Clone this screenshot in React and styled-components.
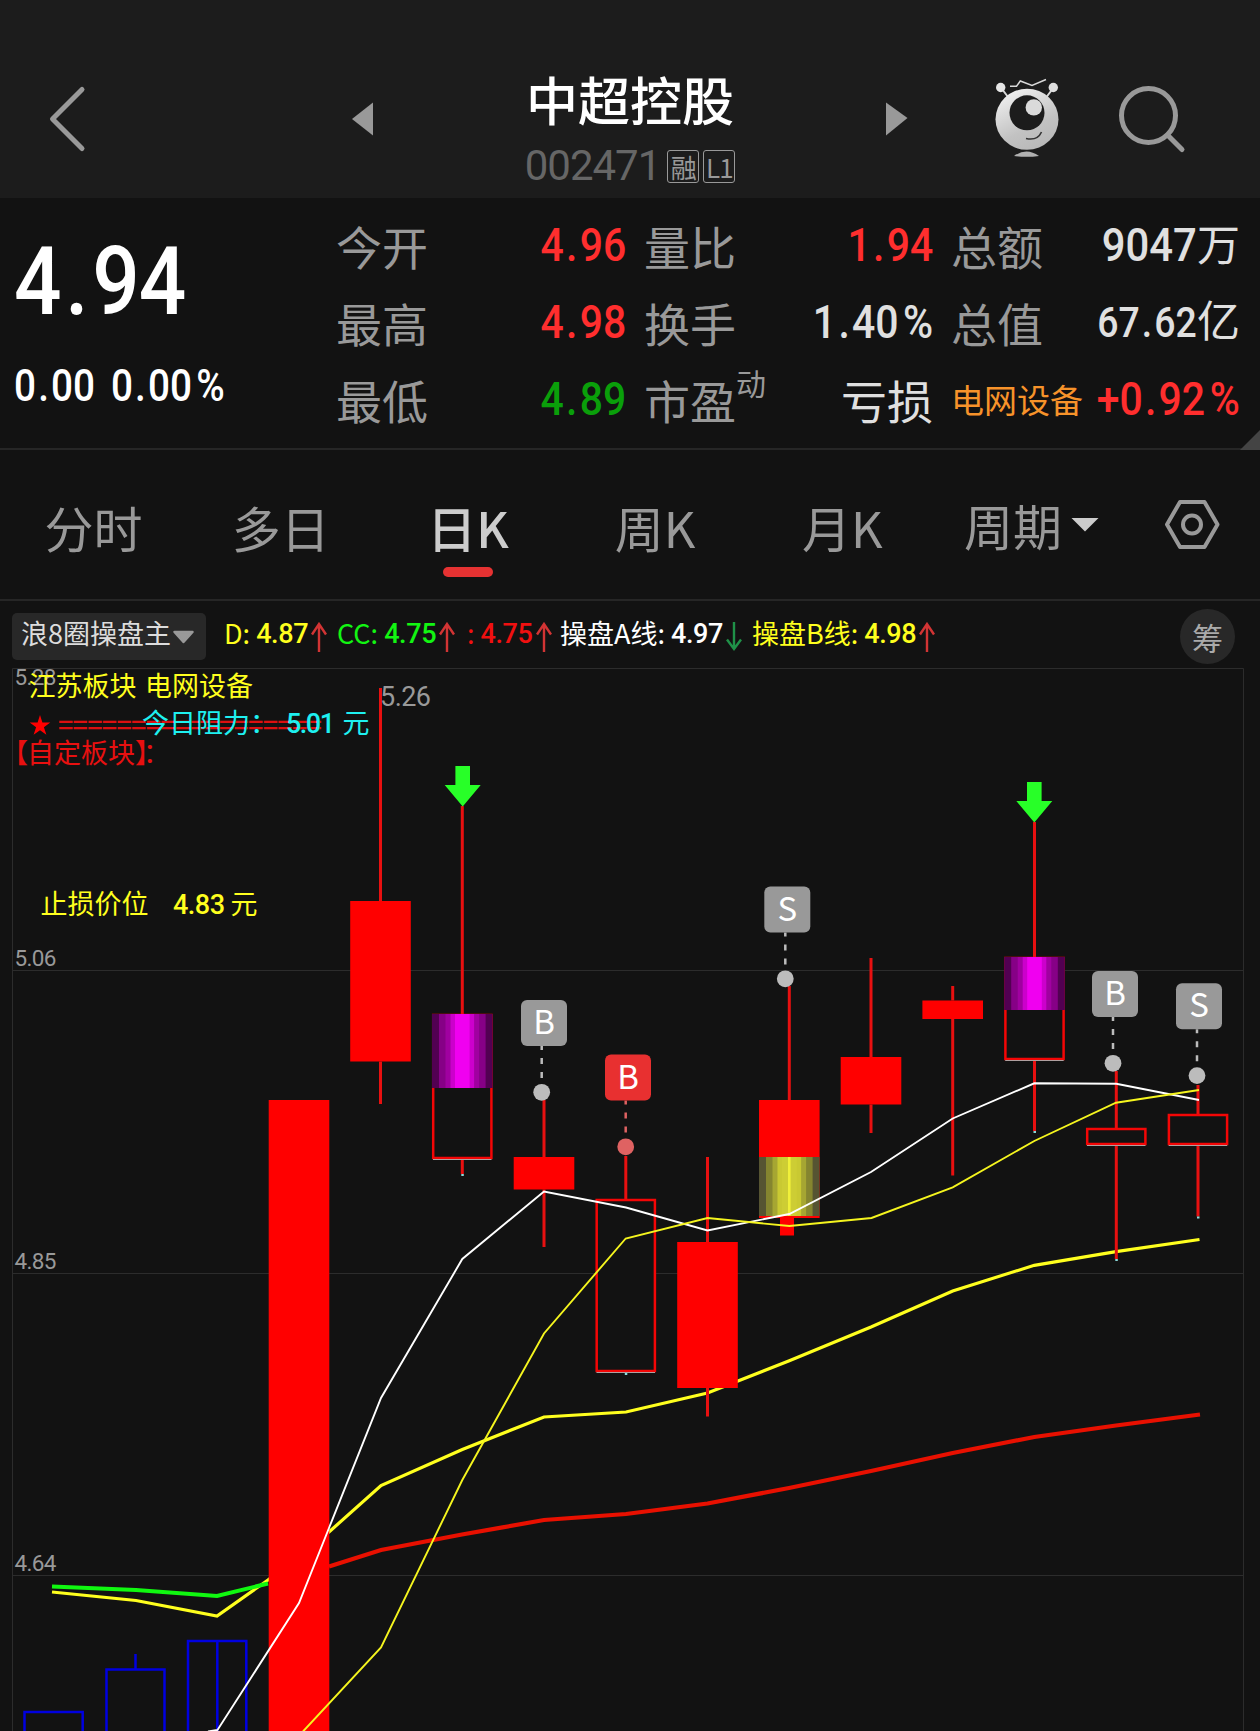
import styled, { createGlobalStyle } from 'styled-components';

const CJK = "'Noto Sans CJK SC', sans-serif";
const NUM = "Roboto, 'Noto Sans CJK SC', sans-serif";

const quotes = [
  { label: '今开', value: '4.96', color: '#ff2e2e' },
  { label: '量比', value: '1.94', color: '#ff2e2e' },
  { label: '总额', value: '9047', unit: '万', size: 47 },
  { label: '最高', value: '4.98', color: '#ff2e2e' },
  { label: '换手', value: '1.40%' },
  { label: '总值', value: '67.62', unit: '亿', size: 42 },
  { label: '最低', value: '4.89', color: '#0a9f0a' },
  { label: '市盈', sup: '动', text: '亏损' },
  { sector: '电网设备', value: '+0.92%', color: '#ff2e2e' },
];

const tabs = ['分时', '多日', '日K', '周K', '月K'];

const indicators = [
  { name: 'D: ', value: '4.87', color: '#ffff1e', width: 113, up: true },
  { name: 'CC: ', value: '4.75', color: '#12f512', width: 130, up: true },
  { name: ': ', value: '4.75', color: '#f01010', width: 93, up: true },
  { name: '操盘A线: ', value: '4.97', color: '#ffffff', width: 192, up: false },
  { name: '操盘B线: ', value: '4.98', color: '#ffff1e', width: 190, up: true },
];

const axis = [
  { y: 689, label: '5.28' },
  { y: 970.5, label: '5.06' },
  { y: 1273, label: '4.85' },
  { y: 1575.5, label: '4.64' },
];

// x = centre of the candle, hi / lo = wick, top / bottom = body
const candles = [
  { x: 299, top: 1100, bottom: 1740 },
  { x: 380.5, hi: 688, top: 901, bottom: 1061.5, lo: 1104 },
  { x: 462.3, hi: 806, top: 1014, bottom: 1159, lo: 1174, hollow: true, band: [1014, 1088, 'purple'] },
  { x: 544, hi: 1100, top: 1157, bottom: 1189.5, lo: 1247 },
  { x: 625.8, hi: 1156, top: 1199, bottom: 1372, lo: 1373, hollow: true },
  { x: 707.5, hi: 1157, top: 1242, bottom: 1388, lo: 1416.5 },
  { x: 789.3, hi: 986, top: 1100, bottom: 1218, lo: 1218, band: [1157, 1216, 'olive'] },
  { x: 871, hi: 958, top: 1057, bottom: 1104.5, lo: 1133 },
  { x: 952.7, hi: 986, top: 1000.5, bottom: 1019, lo: 1175.5 },
  { x: 1034.5, hi: 822, top: 957, bottom: 1060, lo: 1131, hollow: true, band: [957, 1010, 'purple'] },
  { x: 1116.3, hi: 1071, top: 1128, bottom: 1145, lo: 1259, hollow: true },
  { x: 1198, hi: 1085, top: 1114, bottom: 1145, lo: 1216.5, hollow: true },
];

const bands = {
  purple: ['#520052', '#860086', '#a000a0', '#cc00cc', '#f000f0'],
  olive: ['#565432', '#85852f', '#a6a632', '#c9c932', '#cdcd34'],
};
const bandSteps = [0, 7, 13.5, 18.5, 23];

const marks = [
  { x: 521, y: 1000, dot: 541.7, text: 'B' },
  { x: 605, y: 1054.5, dot: 625.7, text: 'B', red: true },
  { x: 764.3, y: 886.5, dot: 785.3, text: 'S' },
  { x: 1092, y: 971, dot: 1113, text: 'B' },
  { x: 1176, y: 983.3, dot: 1197, text: 'S' },
];

// narrow figures, the point and the percent sign get some room
function Figures({ children, right }) {
  return (
    <Narrow $right={right}>
      {children.split(/([.%+])/).filter(Boolean).map((part, i) => (
        /[.%+]/.test(part) ? <Sign key={i} $wide={part !== '.'}>{part}</Sign> : part
      ))}
    </Narrow>
  );
}

function Arrow({ up }) {
  return (
    <ArrowSvg viewBox="0 0 16 30">
      {up ? (
        <path d="M8 30V2M1 12.500L8 2l7 10.500" stroke="#d23434" />
      ) : (
        <path d="M8 0v27M1 17.500L8 27l7-9.500" stroke="#1f9148" />
      )}
    </ArrowSvg>
  );
}

function Robot() {
  return (
    <svg width="66" height="82" viewBox="995 79 66 82">
      <defs>
        <linearGradient id="egg" x1="0.2" y1="0" x2="0.7" y2="1">
          <stop offset="0" stopColor="#f2f2f2" />
          <stop offset="0.65" stopColor="#c2c2c2" />
          <stop offset="1" stopColor="#b8b8b8" />
        </linearGradient>
      </defs>
      <g fill="none" stroke="#d8d8d8">
        <path d="M1011 87.300h6.500l3.800-5.300 11.700 4.500 14-6" strokeWidth="1.500" />
        <path d="M1003 90l6 8M1053.500 90l-6 8" strokeWidth="2" />
      </g>
      <circle cx="1001.700" cy="88.500" r="4.700" fill="#e6e6e6" />
      <circle cx="1054.300" cy="88.500" r="4.700" fill="#dedede" />
      <ellipse cx="1028" cy="120.300" rx="31.500" ry="30.500" fill="url(#egg)" />
      <circle cx="1028" cy="113.800" r="17.500" fill="#1c1c1c" />
      <circle cx="1034.800" cy="108.400" r="8.200" fill="#dadada" />
      <path d="M1027 139.500q11.500 2.500 15.500-6.500" fill="none" stroke="#333" strokeWidth="1.600" />
      <path d="M1015 157q12.500-9 25 0q-12.500 1.700-25 0z" fill="#b0b0b0" />
    </svg>
  );
}

function Candle({ c }) {
  const left = c.x - 30.3;
  return (
    <g>
      {c.hi && <path d={`M${c.x} ${c.hi}V${c.top}M${c.x} ${c.bottom}V${c.lo}`} stroke="#e81010" strokeWidth="3" />}
      {c.hollow ? (
        <>
          <rect x={left + 1.2} y={c.top + 1} width="58.200" height={c.bottom - c.top - 2} fill="#121212" stroke="#f40606" strokeWidth="2.500" />
          <path d={`M${left + 1} ${c.bottom + 0.5}h58.500`} stroke="#b0a0a0" />
          <path d={`M${c.x - 1} ${c.lo + 1}h2.500`} stroke="#8adada" strokeWidth="2" />
        </>
      ) : (
        <rect x={left} y={c.top} width="60.600" height={c.bottom - c.top} fill="#ff0000" />
      )}
      {c.band && bandSteps.map((s, i) => (
        <rect
          key={s}
          x={left + s}
          y={c.band[0]}
          width={60.6 - s * 2}
          height={c.band[1] - c.band[0]}
          fill={bands[c.band[2]][i]}
        />
      ))}
      {c.band && c.band[2] === 'olive' && (
        <>
          <rect x={c.x - 1.3} y={c.band[0]} width="2.600" height={c.band[1] - c.band[0]} fill="#f0f03a" />
          <rect x="780" y="1217" width="14" height="18.500" fill="#ff0000" />
        </>
      )}
    </g>
  );
}

function Mark({ m }) {
  const light = m.red ? '#df6262' : '#bcbcbc';
  return (
    <g>
      <path d={`M${m.dot} ${m.y + 46}v38`} stroke={light} strokeWidth="2.500" strokeDasharray="6 8" strokeDashoffset="2" />
      <circle cx={m.dot} cy={m.y + 92.3} r="8.400" fill={light} />
      <rect x={m.x} y={m.y} width="46" height="46" rx="6" fill={m.red ? '#e83030' : '#999999'} />
      <MarkText x={m.x + 23} y={m.y + 34}>{m.text}</MarkText>
    </g>
  );
}

function Chart() {
  return (
    <ChartSvg viewBox="0 668 1260 1063">
      <path d="M12.500 1731V668.500H1243.500V1731M12.500 970.500h1231M12.500 1273.500h1231M12.500 1575.500h1231" fill="none" stroke="#2c2c2c" />

      {axis.map((a) => (
        <AxisText key={a.label} x="14.500" y={a.y - 4.5} textLength="42">{a.label}</AxisText>
      ))}

      <g fill="none" strokeWidth="3.200">
        <path d="M52 1592L136 1600.500L217 1616L268 1580L329 1532L381 1485.500L462.300 1449.500L544 1417L626 1412L707.500 1393L789.300 1360.700L871 1327L952.700 1291L1034.300 1265.300L1116 1251.700L1199.500 1239.500" stroke="#ffff1e" />
        <path d="M52 1586.500L136 1590L217 1596L268 1583.500" stroke="#10f810" strokeWidth="4" />
        <path d="M329 1566.500L381 1550L462 1534.500L544 1520L626 1514L707.500 1503.500L789 1488L871 1471L952.700 1453L1034.300 1437L1116 1425.500L1200 1414.500" stroke="#e81000" strokeWidth="4.200" />
      </g>

      <g fill="none" stroke="#0000e0" strokeWidth="2.500">
        <path d="M24.500 1731V1712H82.700V1731" />
        <path d="M106.500 1731V1669.500H164.500V1731M135.500 1654v15" />
        <path d="M188 1731V1641H246.300V1731M217.300 1641v90" />
      </g>

      {candles.map((c) => <Candle key={c.x} c={c} />)}

      <g fill="none" strokeWidth="1.900">
        <path d="M208 1731.500L217.500 1730L299 1603L329 1528L381 1398L462.300 1259L544 1191.500L626 1207.500L707.500 1230.500L789.300 1214L871 1172L952.700 1118.500L1034.300 1083.300L1116.300 1083.700L1199 1100" stroke="#ffffff" />
        <path d="M303 1731.500L381 1647.500L462.300 1480L544 1333.500L625.700 1238.500L707.500 1218L789.300 1226L871.500 1218L952.700 1187.300L1034.300 1141L1116 1102.700L1199 1090" stroke="#f5f51e" />
      </g>

      {[[462.7, 766], [1034.3, 782]].map(([x, y]) => (
        <path key={x} d={`M${x - 7.3} ${y}h14.600v19h10.700l-18 21.500l-18-21.500h10.700z`} fill="#28ff28" />
      ))}

      {marks.map((m) => <Mark key={m.x} m={m} />)}

      <NoteText x="28.500" y="696" fill="#ffff1e">江苏板块</NoteText>
      <NoteText x="145" y="696" fill="#ffff1e">电网设备</NoteText>
      <path d="M40 715l2.400 7.600h7.900l-6.400 4.600l2.500 7.600L40 730.200l-6.400 4.600l2.500-7.600l-6.400-4.600h7.900z" fill="#ff0000" />
      <NoteText x="58" y="735" fill="#dc1010" textLength="264" $bold>==================</NoteText>
      <NoteText x="142" y="733" fill="#1ef0f0">今日阻力：</NoteText>
      <NoteNum x="286" y="733" fill="#1ef0f0" textLength="49">5.01</NoteNum>
      <NoteText x="342.500" y="733" fill="#1ef0f0">元</NoteText>
      <NoteText y="763" fill="#e81010">
        <tspan x="1">【</tspan>
        <tspan x="27">自定板块</tspan>
        <tspan x="135">】</tspan>
        <tspan x="143">：</tspan>
      </NoteText>
      <NoteText x="40.500" y="914" fill="#ffff1e">止损价位</NoteText>
      <NoteNum x="173" y="914" fill="#ffff1e" textLength="52">4.83</NoteNum>
      <NoteText x="230.500" y="914" fill="#ffff1e">元</NoteText>
      <NoteNum x="380" y="706" fill="#999999" textLength="51" $light>5.26</NoteNum>
    </ChartSvg>
  );
}

export default function App() {
  return (
    <Page>
      <GlobalStyle />
      <Header>
        <svg width="50" height="70" viewBox="42 84 50 70" fill="none" stroke="#999" strokeWidth="5" strokeLinecap="round" strokeLinejoin="round">
          <path d="M82 89.500L52.500 119L82 148.500" />
        </svg>
        <Switcher>
          <svg width="22" height="34" viewBox="0 0 22 34"><path d="M0 17L21 0.500v33z" fill="#999" /></svg>
          <Stock>
            <StockName>中超控股</StockName>
            <StockCode>
              002471
              <Badge>融</Badge>
              <Badge>L1</Badge>
            </StockCode>
          </Stock>
          <svg width="22" height="34" viewBox="0 0 22 34"><path d="M21.500 16L0 0.500v33z" fill="#999" /></svg>
        </Switcher>
        <Tools>
          <Robot />
          <svg width="70" height="70" viewBox="1117 84 70 70" fill="none" stroke="#999" strokeWidth="5" strokeLinecap="round">
            <circle cx="1148.500" cy="115.500" r="27" />
            <path d="M1168.500 136L1182 149.500" />
          </svg>
        </Tools>
      </Header>

      <Quote>
        <PriceBox>
          <Price><Figures>4.94</Figures></Price>
          <Change><Figures>0.00 0.00%</Figures></Change>
        </PriceBox>
        <QuoteGrid>
          {quotes.map((q) => (
            <QuoteCell key={q.label || q.sector}>
              {q.sector ? <Sector>{q.sector}</Sector> : <Label>{q.label}</Label>}
              {q.sup && <Sup>{q.sup}</Sup>}
              {q.text ? (
                <ValueText>{q.text}</ValueText>
              ) : (
                <Value $color={q.color} $size={q.size} $unit={q.unit}>
                  <Figures right>{q.value}</Figures>
                  {q.unit && <Unit>{q.unit}</Unit>}
                </Value>
              )}
            </QuoteCell>
          ))}
        </QuoteGrid>
        <Corner />
      </Quote>

      <TabBar>
        {tabs.map((t) => <Tab key={t} $active={t === '日K'}>{t}</Tab>)}
        <Period>
          周期
          <svg width="28" height="14" viewBox="0 0 28 14"><path d="M0.500 0h27l-13.500 13.500z" fill="#ccc" /></svg>
        </Period>
        <svg width="58" height="54" viewBox="1164 498 58 54" fill="none" stroke="#999" strokeWidth="4" strokeLinejoin="round">
          <path d="M1181 502h24.500l13 22.500l-13 22.500H1181l-13-22.500z" />
          <circle cx="1193" cy="524.500" r="9" />
        </svg>
      </TabBar>

      <IndicatorBar>
        <Picker>
          <PickerText>浪8圈操盘主</PickerText>
          <svg width="23" height="14" viewBox="0 0 23 14"><path d="M2.500 2h18l-9 10z" fill="#999" stroke="#999" strokeWidth="2.500" strokeLinejoin="round" /></svg>
        </Picker>
        {indicators.map((i) => (
          <Indicator key={i.name} $color={i.color} $width={i.width}>
            <span>{i.name}</span>
            <b>{i.value}</b>
            <Arrow up={i.up} />
          </Indicator>
        ))}
        <Chip>筹</Chip>
      </IndicatorBar>

      <Chart />
    </Page>
  );
}

const GlobalStyle = createGlobalStyle`
  * {
    box-sizing: border-box;
  }
  body {
    margin: 0;
    background: #121212;
  }
  svg {
    display: block;
    flex: none;
  }
`;

const Page = styled.div`
  width: 1260px;
  height: 1731px;
  overflow: hidden;
  background: #121212;
  font-family: ${CJK};
`;

const Header = styled.header`
  height: 198px;
  padding: 40px 73px 0 42px;
  display: flex;
  align-items: center;
  background: #1c1c1c;
`;

const Switcher = styled.div`
  width: 556px;
  margin-left: 260px;
  display: flex;
  align-items: center;
  justify-content: space-between;
`;

const Stock = styled.div`
  display: flex;
  flex-direction: column;
  align-items: center;
  gap: 4px;
  padding-top: 24px;
`;

const StockName = styled.h1`
  margin: 0;
  font-size: 52px;
  font-weight: 500;
  line-height: 66px;
  color: #ffffff;
`;

const StockCode = styled.div`
  display: flex;
  align-items: center;
  font-family: ${NUM};
  font-size: 42px;
  line-height: 60px;
  letter-spacing: -1px;
  color: #666666;
`;

const Badge = styled.span`
  width: 32px;
  height: 33px;
  margin-left: 4px;
  border: 1px solid #999999;
  border-radius: 3px;
  font-family: ${CJK};
  font-size: 26px;
  line-height: 31px;
  text-align: center;
  letter-spacing: -1px;
  color: #999999;

  &:first-of-type {
    margin-left: 7px;
  }
`;

const Tools = styled.div`
  flex: 1;
  padding-left: 86px;
  display: flex;
  align-items: center;
  justify-content: space-between;
`;

const Narrow = styled.span`
  display: inline-block;
  transform: scaleX(0.89);
  transform-origin: ${(props) => (props.$right ? 'right' : 'left')} center;
`;

const Sign = styled.span`
  margin: 0 ${(props) => (props.$wide ? 0 : 0.055)}em;
  padding-left: ${(props) => (props.$wide ? 0.11 : 0)}em;
`;

const Quote = styled.section`
  position: relative;
  height: 252px;
  padding-left: 14px;
  display: flex;
  border-bottom: 2px solid #262626;
`;

const PriceBox = styled.div`
  width: 322px;
  font-family: ${NUM};
  font-weight: 500;
  color: #ffffff;
`;

const Price = styled.div`
  margin-top: 29px;
  font-size: 94px;
  line-height: 110px;
  letter-spacing: -1px;
`;

const Change = styled.div`
  margin-top: 25px;
  font-size: 43.5px;
  line-height: 50px;
  word-spacing: 7px;
`;

const QuoteGrid = styled.div`
  width: 904px;
  padding-top: 8px;
  display: grid;
  grid-template-columns: 290px 289px 289px;
  grid-auto-rows: 77px;
  column-gap: 18px;
`;

const QuoteCell = styled.div`
  display: flex;
  align-items: center;
  white-space: nowrap;
`;

const Label = styled.span`
  font-size: 46px;
  line-height: 70px;
  color: #999999;
`;

const Sup = styled.sup`
  font-size: 30px;
  line-height: 30px;
  margin-bottom: 34px;
  color: #999999;
`;

const Sector = styled.span`
  margin-right: -20px;
  font-size: 33px;
  line-height: 60px;
  color: #f7932a;
`;

const Value = styled.span`
  margin-left: auto;
  margin-bottom: ${(props) => (props.$unit ? 3 : 0)}px;
  font-family: ${NUM};
  font-size: ${(props) => props.$size || 46}px;
  font-weight: 500;
  line-height: 60px;
  color: ${(props) => props.$color || '#e0e0e0'};
`;

const Unit = styled.span`
  font-family: ${CJK};
  font-size: 43px;
  font-weight: 400;
`;

const ValueText = styled.span`
  margin-left: auto;
  font-size: 46px;
  line-height: 70px;
  color: #e0e0e0;
`;

const Corner = styled.i`
  position: absolute;
  right: 0;
  bottom: -2px;
  border-left: 20px solid transparent;
  border-bottom: 20px solid #444444;
`;

const TabBar = styled.nav`
  height: 151px;
  display: flex;
  align-items: center;
  border-bottom: 2px solid #262626;
`;

const Tab = styled.div`
  width: 187.2px;
  height: 149px;
  padding-top: 40px;
  font-size: 49px;
  line-height: 74px;
  text-align: center;
  font-weight: ${(props) => (props.$active ? 500 : 400)};
  color: ${(props) => (props.$active ? '#cccccc' : '#999999')};

  &::after {
    content: '';
    display: block;
    width: 50px;
    height: 10px;
    margin: 3px auto 0;
    border-radius: 5px;
    background: ${(props) => (props.$active ? '#e63232' : 'transparent')};
  }
`;

const Period = styled.div`
  width: 227px;
  padding-left: 28px;
  display: flex;
  align-items: center;
  gap: 9px;
  font-size: 49px;
  line-height: 74px;
  color: #999999;
`;

const IndicatorBar = styled.div`
  height: 67px;
  padding: 4px 25px 0 12px;
  display: flex;
  align-items: center;
`;

const Picker = styled.div`
  width: 194px;
  height: 47px;
  margin-right: 18px;
  padding-left: 9px;
  display: flex;
  align-items: center;
  gap: 1px;
  border-radius: 5px;
  background: #282828;
`;

const PickerText = styled.span`
  font-size: 27px;
  line-height: 40px;
  margin-bottom: 8px;
  color: #dddddd;
`;

const Indicator = styled.div`
  width: ${(props) => props.$width}px;
  display: flex;
  align-items: center;
  font-size: 27px;
  line-height: 40px;
  white-space: pre;
  color: ${(props) => props.$color};

  span {
    margin-bottom: 7px;
  }

  b {
    margin-bottom: 5px;
    font-family: ${NUM};
    font-weight: 500;
    letter-spacing: -0.4px;
  }
`;

const ArrowSvg = styled.svg`
  width: 16px;
  height: 30px;
  margin-left: 3px;
  fill: none;
  stroke-width: 2.4px;
`;

const Chip = styled.div`
  width: 55px;
  height: 55px;
  margin-left: auto;
  border-radius: 50%;
  background: #282828;
  font-size: 31px;
  line-height: 55px;
  text-align: center;
  color: #aaaaaa;
`;

const ChartSvg = styled.svg`
  width: 1260px;
  height: 1063px;
`;

const AxisText = styled.text`
  font-family: ${NUM};
  font-size: 22.5px;
  fill: #999999;
`;

const NoteText = styled.text`
  font-family: ${CJK};
  font-size: 27px;
  font-weight: ${(props) => (props.$bold ? 500 : 400)};
`;

const NoteNum = styled.text`
  font-family: ${NUM};
  font-size: 27px;
  font-weight: ${(props) => (props.$light ? 400 : 500)};
`;

const MarkText = styled.text`
  font-family: ${CJK};
  font-size: 33px;
  text-anchor: middle;
  fill: #ffffff;
`;
